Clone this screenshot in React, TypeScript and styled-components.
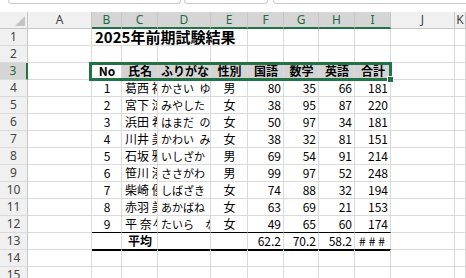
import React from 'react';
import styled, { createGlobalStyle, css } from 'styled-components';

const GlobalStyle = createGlobalStyle`
  html, body {
    margin: 0;
    padding: 0;
    background: #fff;
    overflow: hidden;
  }
  body {
    font-family: "Noto Sans CJK JP", sans-serif;
  }
`;

const COLS = ['A', 'B', 'C', 'D', 'E', 'F', 'G', 'H', 'I', 'J', 'K'];
const WIDTHS = [64, 30, 36, 53, 37, 36, 35, 36, 36, 64];
const SELECTED = ['B', 'C', 'D', 'E', 'F', 'G', 'H', 'I'];

const Screen = styled.div`
  width: 466px;
  height: 278px;
  overflow: hidden;
  background: #fff;
`;

const FormulaStrip = styled.div`
  display: flex;
  height: 12px;
  align-items: flex-start;
`;

const BarStub = styled.div<{ $w: number; $gap: number }>`
  flex: none;
  margin-left: ${(p) => p.$gap}px;
  width: ${(p) => p.$w}px;
  height: 3px;
  border: 1px solid #c9c9c9;
  border-top: none;
  border-radius: 0 0 4px 4px;
`;

const Sheet = styled.div`
  position: relative;
  display: grid;
  grid-template-columns: 28px ${WIDTHS.map((w) => `${w}px`).join(' ')} 1fr;
  grid-auto-rows: 17px;
`;

const Corner = styled.div`
  position: relative;
  box-sizing: border-box;
  background: #f0f0f0;
  border-right: 1px solid #c6c6c6;
  border-bottom: 1px solid #c6c6c6;

  &::after {
    content: '';
    position: absolute;
    right: 2px;
    bottom: 2px;
    border-style: solid;
    border-width: 0 0 10px 10px;
    border-color: transparent transparent #c4c4c4 transparent;
  }
`;

const ColHead = styled.div<{ $sel?: boolean }>`
  box-sizing: border-box;
  background: ${(p) => (p.$sel ? '#d5d5d5' : '#f0f0f0')};
  color: ${(p) => (p.$sel ? '#1e6b41' : '#444')};
  border-right: 1px solid #c6c6c6;
  border-bottom: ${(p) => (p.$sel ? '2px solid #217346' : '1px solid #c6c6c6')};
  font: 12px/16px "Noto Sans", sans-serif;
  text-align: center;
`;

const RowHead = styled.div<{ $sel?: boolean }>`
  box-sizing: border-box;
  background: ${(p) => (p.$sel ? '#d5d5d5' : '#f0f0f0')};
  color: ${(p) => (p.$sel ? '#1e6b41' : '#444')};
  border-right: ${(p) => (p.$sel ? '2px solid #217346' : '1px solid #c6c6c6')};
  border-bottom: 1px solid #dadada;
  font: 12px/16px "Noto Sans", sans-serif;
  text-align: center;
`;

type Align = 'left' | 'center' | 'right';
type Rule = 'none' | 'thin' | 'thick';

const Cell = styled.div<{
  $align?: Align;
  $bold?: boolean;
  $fill?: string;
  $rule?: Rule;
  $span?: number;
  $title?: boolean;
  $spread?: boolean;
  $kana?: boolean;
}>`
  box-sizing: border-box;
  grid-column: span ${(p) => p.$span ?? 1};
  border-right: 1px solid #dadada;
  border-bottom: 1px solid ${(p) => (p.$rule && p.$rule !== 'none' ? '#000' : '#dadada')};
  ${(p) =>
    p.$rule === 'thick' &&
    css`
      box-shadow: 0 1px 0 #000;
    `}
  background: ${(p) => p.$fill ?? 'transparent'};
  padding: 0 2px 0 3px;
  font-size: ${(p) => (p.$title ? 15 : p.$kana ? 11 : 12)}px;
  font-weight: ${(p) => (p.$bold ? 700 : 400)};
  line-height: 16px;
  letter-spacing: ${(p) => (p.$spread ? '3px' : 'normal')};
  text-align: ${(p) => p.$align ?? 'left'};
  white-space: nowrap;
  overflow: hidden;
  color: #000;
`;

const Selection = styled.div`
  position: absolute;
  left: 89px;
  top: 50px;
  width: 303px;
  height: 19px;
  box-sizing: border-box;
  border: 3px solid #217346;
  pointer-events: none;
`;

const FillHandle = styled.div`
  position: absolute;
  left: 387px;
  top: 64px;
  width: 7px;
  height: 7px;
  box-sizing: border-box;
  background: #217346;
  border: 1px solid #fff;
`;

type Student = {
  no: number;
  name: string;
  kana: string;
  sex: string;
  jp: number;
  math: number;
  en: number;
};

// \u2002 = en space, matches the gap Excel leaves between family and given name
const students: Student[] = [
  { no: 1, name: '葛西 祐介', kana: 'かさい\u2002ゆうすけ', sex: '男', jp: 80, math: 35, en: 66 },
  { no: 2, name: '宮下 涼子', kana: 'みやした\u2002りょうこ', sex: '女', jp: 38, math: 95, en: 87 },
  { no: 3, name: '浜田 希', kana: 'はまだ\u2002のぞみ', sex: '女', jp: 50, math: 97, en: 34 },
  { no: 4, name: '川井 美咲', kana: 'かわい\u2002みさき', sex: '女', jp: 38, math: 32, en: 81 },
  { no: 5, name: '石坂 雅人', kana: 'いしざか\u2002まさと', sex: '男', jp: 69, math: 54, en: 91 },
  { no: 6, name: '笹川 湊', kana: 'ささがわ\u2002みなと', sex: '男', jp: 99, math: 97, en: 52 },
  { no: 7, name: '柴崎 優奈', kana: 'しばざき\u2002ゆうな', sex: '女', jp: 74, math: 88, en: 32 },
  { no: 8, name: '赤羽 美月', kana: 'あかばね\u2002みづき', sex: '女', jp: 63, math: 69, en: 21 },
  { no: 9, name: '平 奈々', kana: 'たいら　なな', sex: '女', jp: 49, math: 65, en: 60 },
];

const HEADS = ['氏名', 'ふりがな', '性別', '国語', '数学', '英語', '合計'];

const avg = (key: 'jp' | 'math' | 'en') =>
  (students.reduce((s, r) => s + r[key], 0) / students.length).toFixed(1);

function Blank({ n, rule }: { n: number; rule?: Rule }) {
  return (
    <>
      {Array.from({ length: n }, (_, i) => (
        <Cell key={i} $rule={rule} />
      ))}
    </>
  );
}

function App() {
  return (
    <Screen>
      <GlobalStyle />
      <FormulaStrip>
        <BarStub $gap={8} $w={171} />
        <BarStub $gap={3} $w={82} />
        <BarStub $gap={5} $w={210} />
      </FormulaStrip>
      <Sheet>
        <Corner />
        {COLS.map((c) => (
          <ColHead key={c} $sel={SELECTED.includes(c)}>
            {c}
          </ColHead>
        ))}

        {/* row 1 - title spills over C:E, so no gridlines there */}
        <RowHead>1</RowHead>
        <Cell />
        <Cell $span={4} $title $bold>
          2025年前期試験結果
        </Cell>
        <Blank n={6} />

        <RowHead>2</RowHead>
        <Blank n={11} />

        {/* row 3 - table header */}
        <RowHead $sel>3</RowHead>
        <Cell />
        <Cell $align="center" $bold>
          No
        </Cell>
        {HEADS.map((h) => (
          <Cell key={h} $align="center" $bold $fill="#d4d4d4">
            {h}
          </Cell>
        ))}
        <Blank n={2} />

        {students.map((s, i) => {
          const rule: Rule = i === students.length - 1 ? 'thin' : 'none';
          return (
            <React.Fragment key={s.no}>
              <RowHead>{i + 4}</RowHead>
              <Cell />
              <Cell $align="center" $rule={rule}>{s.no}</Cell>
              <Cell $rule={rule}>{s.name}</Cell>
              <Cell $rule={rule} $kana>{s.kana}</Cell>
              <Cell $align="center" $rule={rule}>{s.sex}</Cell>
              <Cell $align="right" $rule={rule}>{s.jp}</Cell>
              <Cell $align="right" $rule={rule}>{s.math}</Cell>
              <Cell $align="right" $rule={rule}>{s.en}</Cell>
              <Cell $align="right" $rule={rule}>{s.jp + s.math + s.en}</Cell>
              <Blank n={2} />
            </React.Fragment>
          );
        })}

        {/* row 13 - averages */}
        <RowHead>13</RowHead>
        <Cell />
        <Cell $rule="thick" />
        <Cell $align="center" $bold $rule="thick">
          平均
        </Cell>
        <Blank n={2} rule="thick" />
        <Cell $align="right" $rule="thick">{avg('jp')}</Cell>
        <Cell $align="right" $rule="thick">{avg('math')}</Cell>
        <Cell $align="right" $rule="thick">{avg('en')}</Cell>
        <Cell $align="right" $rule="thick" $spread>
          ###
        </Cell>
        <Blank n={2} />

        <RowHead>14</RowHead>
        <Blank n={11} />
        <RowHead>15</RowHead>
        <Blank n={11} />

        <Selection />
        <FillHandle />
      </Sheet>
    </Screen>
  );
}

export default App;
